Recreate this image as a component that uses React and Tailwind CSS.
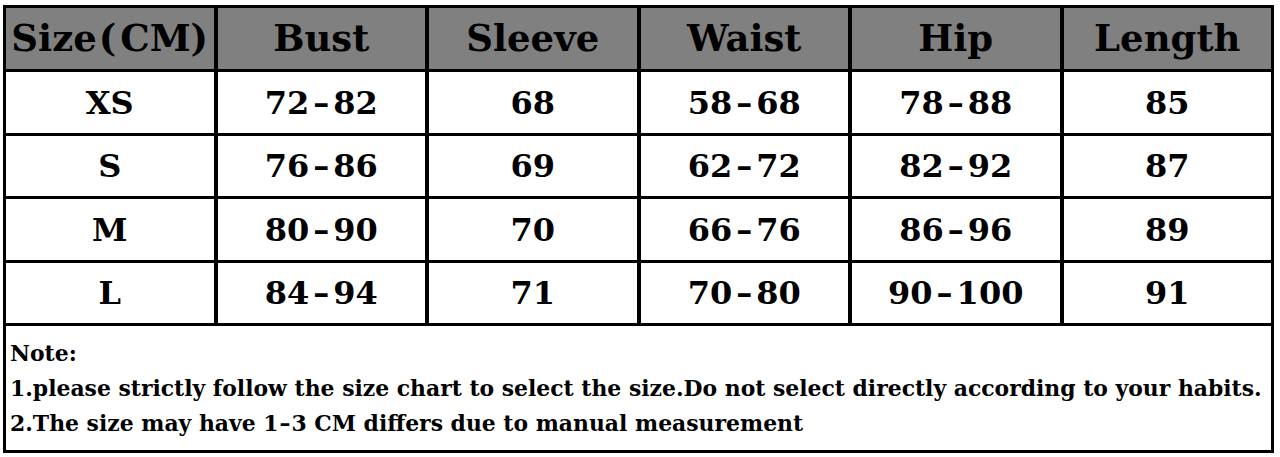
function Range({ v }) {
  const parts = v.split("-");
  if (parts.length < 2) return <span>{v}</span>;
  return (
    <span>
      {parts[0]}
      <span className="mx-[4px]">–</span>
      {parts[1]}
    </span>
  );
}

export default function App() {
  const headers = ["Bust", "Sleeve", "Waist", "Hip", "Length"];
  const rows = [
    ["XS", "72-82", "68", "58-68", "78-88", "85"],
    ["S", "76-86", "69", "62-72", "82-92", "87"],
    ["M", "80-90", "70", "66-76", "86-96", "89"],
    ["L", "84-94", "71", "70-80", "90-100", "91"],
  ];
  const rowH = ["h-[61px]", "h-[60px]", "h-[61px]", "h-[60px]"];
  return (
    <div
      className="w-[1280px] h-[457px] bg-white pt-[5px] pl-[3px]"
      style={{ fontFamily: '"DejaVu Serif", "Liberation Serif", serif' }}
    >
      <div className="w-[1271px] bg-black p-[3px] grid grid-cols-6 gap-x-[4px] gap-y-[3px] font-bold text-black">
        <div className="h-[61px] bg-[#808080] flex items-center justify-center text-[37px] leading-none">
          <span>
            Size<span className="ml-[2px] mr-[4px]">(</span>CM)
          </span>
        </div>
        {headers.map((h) => (
          <div
            key={h}
            className="h-[61px] bg-[#808080] flex items-center justify-center text-[37px] leading-none"
          >
            {h}
          </div>
        ))}
        {rows.map((r, i) =>
          r.map((c, j) => (
            <div
              key={i + "-" + j}
              className={`${rowH[i]} bg-white flex items-center justify-center text-[32px] leading-none`}
            >
              <Range v={c} />
            </div>
          ))
        )}
        <div className="col-span-6 h-[124px] bg-white flex flex-col justify-center pl-[4px] text-[21.9px] leading-[35px]">
          <div>Note:</div>
          <div>1.please strictly follow the size chart to select the size.Do not select directly according to your habits.</div>
          <div>
            2.The size may have 1<span className="mx-[1px]">–</span>3 CM differs due to manual measurement
          </div>
        </div>
      </div>
    </div>
  );
}
